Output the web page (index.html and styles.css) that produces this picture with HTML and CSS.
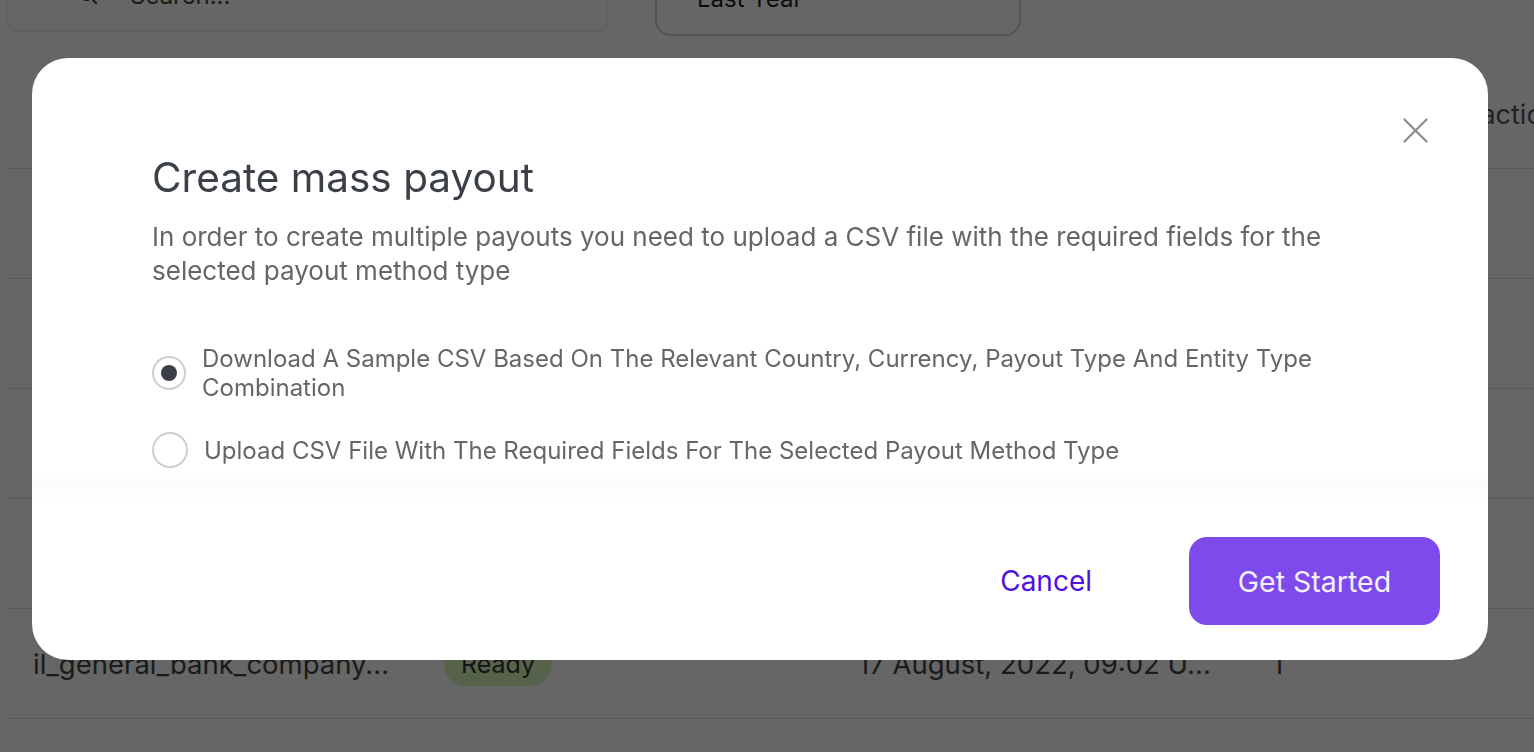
FILE: index.html
```html
<!DOCTYPE html>
<html lang="en">
<head>
    <meta charset="UTF-8">
    <meta name="viewport" content="width=device-width, initial-scale=1.0">
    <title>Mass payouts</title>
    <link rel="stylesheet" href="styles.css">
</head>
<body>
    <div id="page">
        <div class="toolbar">
            <div class="search">
                <svg class="search-icon" width="22" height="22" viewBox="0 0 24 24" fill="none" stroke="#333" stroke-width="2" stroke-linecap="round"><circle cx="10.5" cy="10.5" r="7"/><path d="M16 16l5 5"/></svg>
                <span>Search...</span>
            </div>
            <div class="select">Last Year</div>
        </div>

        <div class="table">
            <div class="row head">
                <div>Name</div>
                <div>Status</div>
                <div>Created</div>
                <div>Payouts</div>
                <div>Transactions</div>
            </div>
            <div class="row">
                <div>il_general_bank_company...</div>
                <div><span class="badge">Ready</span></div>
                <div>17 August, 2022, 09:40 U...</div>
                <div>3</div>
                <div></div>
            </div>
            <div class="row">
                <div>il_general_bank_company...</div>
                <div><span class="badge">Ready</span></div>
                <div>17 August, 2022, 09:31 U...</div>
                <div>2</div>
                <div></div>
            </div>
            <div class="row">
                <div>il_general_bank_company...</div>
                <div><span class="badge">Ready</span></div>
                <div>17 August, 2022, 09:20 U...</div>
                <div>1</div>
                <div></div>
            </div>
            <div class="row">
                <div>il_general_bank_company...</div>
                <div><span class="badge">Ready</span></div>
                <div>17 August, 2022, 09:11 U...</div>
                <div>1</div>
                <div></div>
            </div>
            <div class="row">
                <div>il_general_bank_company...</div>
                <div><span class="badge">Ready</span></div>
                <div>17 August, 2022, 09:02 U...</div>
                <div>1</div>
                <div></div>
            </div>
            <div class="row">
                <div></div>
                <div></div>
                <div></div>
                <div></div>
                <div></div>
            </div>
        </div>
    </div>

    <div id="overlay">
        <div class="modal">
            <button class="close" aria-label="Close">
                <svg width="25" height="25" viewBox="0 0 26 26" fill="none" stroke="#8e8e8e" stroke-width="2.4" stroke-linecap="round"><path d="M1.5 1.5l23 23M24.5 1.5l-23 23"/></svg>
            </button>

            <div class="modal-body">
                <h2>Create mass payout</h2>
                <p class="desc">In order to create multiple payouts you need to upload a CSV file with the required fields for the selected payout method type</p>

                <div class="options">
                    <label class="option">
                        <span class="radio checked"></span>
                        <span class="option-text">Download A Sample CSV Based On The Relevant Country, Currency, Payout Type And Entity Type Combination</span>
                    </label>
                    <label class="option">
                        <span class="radio"></span>
                        <span class="option-text">Upload CSV File With The Required Fields For The Selected Payout Method Type</span>
                    </label>
                </div>
            </div>

            <div class="modal-footer">
                <button class="btn-cancel">Cancel</button>
                <button class="btn-primary">Get Started</button>
            </div>
        </div>
    </div>
</body>
</html>
```

FILE: styles.css
```css
*{
    box-sizing: border-box;
}
body{
    font-family: Inter, "Noto Sans", sans-serif;
    background-color: white;
    margin: 0;
    padding: 0;
    height: 100vh;
    overflow: hidden;
    color: #333;
}

/* page behind the dialog */
#page{
    margin-top: -40px;
}
.toolbar{
    display: flex;
    align-items: flex-start;
    padding-left: 8px;
}
.search{
    width: 599px;
    height: 70px;
    background-color: white;
    border-radius: 10px;
    box-shadow: 0 1px 4px rgba(0,0,0,0.12);
    display: flex;
    align-items: center;
    padding-left: 69px;
    font-size: 24px;
    color: #444;
}
.search-icon{
    margin-right: 31px;
}
.select{
    width: 366px;
    height: 76px;
    margin-left: 48px;
    border: 2px solid #d4d4d4;
    border-radius: 16px;
    display: flex;
    align-items: center;
    padding-left: 40px;
    font-size: 24px;
    color: #222;
}

.table{
    margin-top: 24px;
    margin-left: 8px;
}
.row{
    display: grid;
    grid-template-columns: 411px 414px 414px 137px 1fr;
    align-items: center;
    padding-left: 25px;
    height: 110px;
    border-bottom: 1px solid #e1e1e1;
    font-size: 27.5px;
    color: #444;
    white-space: nowrap;
}
.row.head{
    height: 109px;
    color: #555;
    font-size: 27px;
}
.badge{
    display: inline-block;
    padding: 0 17px;
    height: 44px;
    line-height: 44px;
    border-radius: 22px;
    background-color: #d7f7b9;
    color: #333;
    font-size: 25px;
}

/* dialog */
#overlay{
    position: fixed;
    inset: 0;
    background-color: rgba(0,0,0,0.6);
    padding: 58px 0 0 32px;
}
.modal{
    position: relative;
    width: 1456px;
    height: 602px;
    background-color: white;
    border-radius: 36px;
    display: flex;
    flex-direction: column;
}
.close{
    position: absolute;
    top: 60px;
    right: 60px;
    background: none;
    border: none;
    padding: 0;
    cursor: pointer;
    line-height: 0;
}
.modal-body{
    position: relative;
    padding: 96px 100px 0 120px;
    flex: 1;
}
.modal-body::after{
    content: "";
    position: absolute;
    left: 0;
    right: 0;
    bottom: 34px;
    height: 34px;
    background: linear-gradient(rgba(0,0,0,0), rgba(0,0,0,0.012), rgba(0,0,0,0));
}
h2{
    margin: 0;
    font-size: 40.5px;
    line-height: 48px;
    font-weight: 400;
    color: #3b3f47;
}
.desc{
    margin: 18px 0 0;
    font-size: 26px;
    line-height: 34px;
    color: #666;
    max-width: 1200px;
}
.options{
    margin-top: 56px;
    display: flex;
    flex-direction: column;
    gap: 30px;
}
.option{
    display: flex;
    align-items: center;
    gap: 16px;
    cursor: pointer;
}
.option + .option .radio{
    width: 36px;
    height: 36px;
}
.radio{
    flex: none;
    width: 34px;
    height: 34px;
    border-radius: 50%;
    border: 2px solid #cfcfcf;
    display: flex;
    align-items: center;
    justify-content: center;
}
.radio.checked::before{
    content: "";
    width: 16px;
    height: 16px;
    border-radius: 50%;
    background-color: #3b3f47;
}
.option-text{
    font-size: 24px;
    line-height: 29px;
    color: #666;
    max-width: 1140px;
}

.modal-footer{
    display: flex;
    justify-content: flex-end;
    align-items: center;
    gap: 97px;
    padding: 0 48px 35px 0;
}
.btn-cancel{
    background: none;
    border: none;
    padding: 0;
    font-family: inherit;
    font-size: 28px;
    color: #4d12e2;
    cursor: pointer;
}
.btn-primary{
    width: 251px;
    height: 88px;
    border: none;
    border-radius: 18px;
    background-color: #7f4aeb;
    color: #f4f0fd;
    font-family: inherit;
    font-size: 28.5px;
    cursor: pointer;
}
```
